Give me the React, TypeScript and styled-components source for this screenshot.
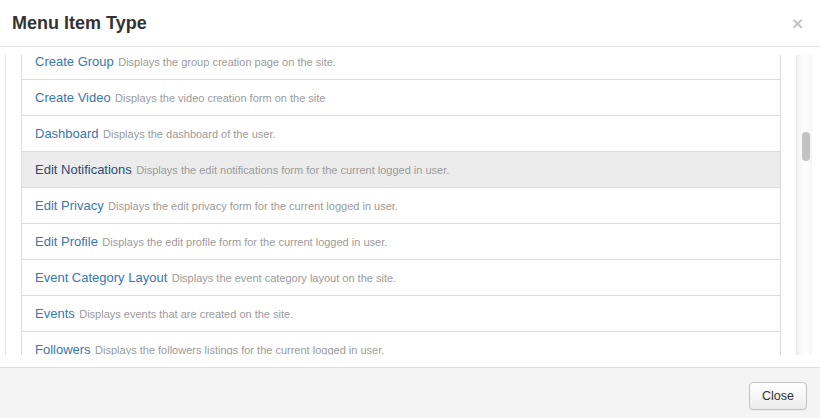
import React from "react";
import styled, { createGlobalStyle } from "styled-components";

const items = [
  { title: "Create Group", desc: "Displays the group creation page on the site." },
  { title: "Create Video", desc: "Displays the video creation form on the site" },
  { title: "Dashboard", desc: "Displays the dashboard of the user." },
  {
    title: "Edit Notifications",
    desc: "Displays the edit notifications form for the current logged in user.",
    active: true,
  },
  { title: "Edit Privacy", desc: "Displays the edit privacy form for the current logged in user." },
  { title: "Edit Profile", desc: "Displays the edit profile form for the current logged in user." },
  { title: "Event Category Layout", desc: "Displays the event category layout on the site." },
  { title: "Events", desc: "Displays events that are created on the site." },
  { title: "Followers", desc: "Displays the followers listings for the current logged in user." },
  { title: "Friends", desc: "Displays the friends listings for the current logged in user." },
];

const GlobalStyle = createGlobalStyle`
  html, body {
    margin: 0;
    padding: 0;
    background: #fff;
    font-family: "Liberation Sans", Arial, sans-serif;
  }
`;

const Modal = styled.div`
  width: 820px;
  height: 418px;
  display: flex;
  flex-direction: column;
  overflow: hidden;
  background: #fff;
`;

const Header = styled.div`
  height: 46px;
  flex: none;
  display: flex;
  align-items: center;
  justify-content: space-between;
  padding: 0 17px 0 12px;
  border-bottom: 1px solid #e5e5e5;
`;

const Title = styled.h4`
  margin: 0;
  font-size: 18px;
  font-weight: bold;
  color: #333;
  padding-top: 1px;
`;

const CloseX = styled.button`
  border: 0;
  background: none;
  padding: 0;
  font-family: "Liberation Sans", Arial, sans-serif;
  font-size: 19px;
  font-weight: bold;
  line-height: 1;
  color: #c6c6c6;
  cursor: pointer;
`;

const Body = styled.div`
  flex: none;
  height: 320px;
  box-sizing: border-box;
  padding: 8px 8px 12px 5px;
`;

const Frame = styled.div`
  height: 300px;
  display: flex;
  border-left: 1px solid #e2e2e2;
`;

const Viewport = styled.div`
  flex: 1;
  overflow: hidden;
  padding: 0 15px;
`;

const List = styled.ul`
  list-style: none;
  margin: -11px 0 0;
  padding: 0;
  border-left: 1px solid #ddd;
  border-right: 1px solid #ddd;
`;

const Row = styled.li<{ $active?: boolean }>`
  height: 35px;
  line-height: 33px;
  padding: 0 13px;
  border-bottom: 1px solid #ddd;
  white-space: nowrap;
  background: ${(p) => (p.$active ? "#ececec" : "#fff")};
`;

const ItemTitle = styled.a<{ $active?: boolean }>`
  font-size: 13px;
  color: ${(p) => (p.$active ? "#2b4d73" : "#3877b4")};
  text-decoration: none;
`;

const ItemDesc = styled.span`
  font-size: 11px;
  color: #9b9b9b;
`;

const Track = styled.div`
  width: 16px;
  flex: none;
  box-sizing: border-box;
  border-left: 1px solid #e9e9e9;
  background: linear-gradient(to right, #f1f1f1, #fbfbfb 35%, #fff 65%, #f3f3f3);
  padding: 77px 0 0 5px;
`;

const Thumb = styled.div`
  width: 8px;
  height: 29px;
  border-radius: 4px;
  background: #c2c2c2;
`;

const Footer = styled.div`
  flex: 1;
  display: flex;
  justify-content: flex-end;
  align-items: flex-start;
  padding: 14px 13px 0 0;
  background: #f4f4f4;
  border-top: 1px solid #dedede;
`;

const Button = styled.button`
  height: 28px;
  padding: 0 12px;
  font-family: "Liberation Sans", Arial, sans-serif;
  font-size: 12.5px;
  color: #333;
  border: 1px solid #c4c4c4;
  border-radius: 4px;
  background: linear-gradient(to bottom, #fff, #ececec);
  box-shadow: 0 1px 1px rgba(0, 0, 0, 0.05);
  cursor: pointer;
`;

export default function App() {
  return (
    <Modal>
      <GlobalStyle />
      <Header>
        <Title>Menu Item Type</Title>
        <CloseX aria-label="Close">×</CloseX>
      </Header>
      <Body>
        <Frame>
          <Viewport>
            <List>
              {items.map((it) => (
                <Row key={it.title} $active={it.active}>
                  <ItemTitle href="#" $active={it.active}>
                    {it.title}
                  </ItemTitle>{" "}
                  <ItemDesc>{it.desc}</ItemDesc>
                </Row>
              ))}
            </List>
          </Viewport>
          <Track>
            <Thumb />
          </Track>
        </Frame>
      </Body>
      <Footer>
        <Button>Close</Button>
      </Footer>
    </Modal>
  );
}
